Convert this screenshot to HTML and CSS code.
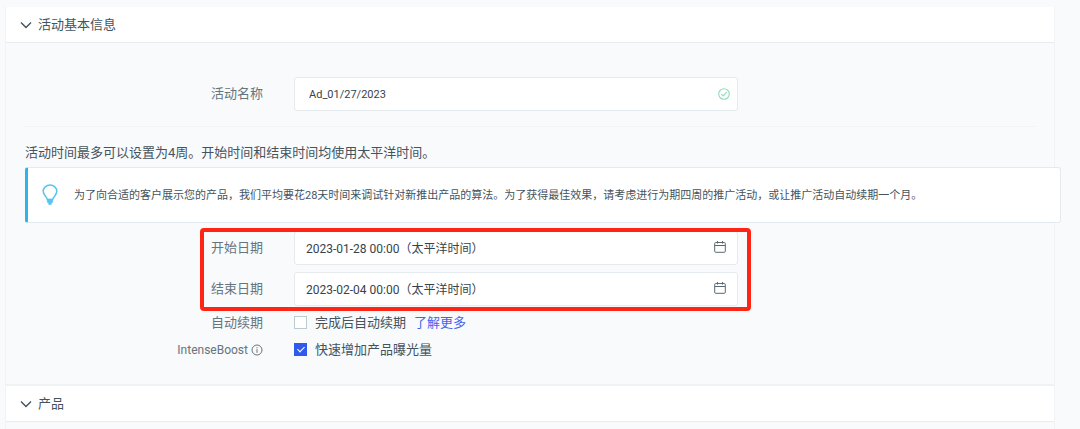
FILE: index.html
```html
<!DOCTYPE html>
<html lang="zh-CN">
<head>
    <meta charset="UTF-8">
    <meta name="viewport" content="width=device-width, initial-scale=1.0">
    <title>活动基本信息</title>
    <link rel="stylesheet" href="styles.css">
</head>
<body>
    <div class="panel">
        <section>
            <h2 class="section-header">
                <svg class="chevron" viewBox="0 0 12 12" fill="none" stroke="currentColor" stroke-width="1.4">
                    <polyline points="1 3.5 6 8.5 11 3.5"></polyline>
                </svg>
                活动基本信息
            </h2>
            <div class="section-body">
                <div class="form-row name-row">
                    <label class="form-label" for="campaignName">活动名称</label>
                    <div class="field">
                        <input type="text" id="campaignName" class="text-input name-input" value="Ad_01/27/2023">
                        <svg class="field-icon valid-icon" viewBox="0 0 12 12" fill="none" stroke="currentColor" stroke-width="1.1">
                            <circle cx="6" cy="6" r="5.3"></circle>
                            <polyline points="3.3 6.2 5.2 7.9 8.7 4.2"></polyline>
                        </svg>
                    </div>
                </div>

                <p class="time-note">活动时间最多可以设置为4周。开始时间和结束时间均使用太平洋时间。</p>

                <div class="tip">
                    <svg class="tip-icon" viewBox="0 0 16 22" fill="none" stroke="currentColor" stroke-width="1.5">
                        <path d="M5.3 15.5C5.2 13 1.2 11.3 1.2 7.3a6.8 6.3 0 0 1 13.6 0c0 4-4 5.7-4.1 8.2z"></path>
                        <path d="M5.3 15.3h5.4v3l-1.5 1.2v1H6.8v-1l-1.5-1.2z" fill="currentColor" stroke-width="0.6"></path>
                    </svg>
                    <p>为了向合适的客户展示您的产品，我们平均要花28天时间来调试针对新推出产品的算法。为了获得最佳效果，请考虑进行为期四周的推广活动，或让推广活动自动续期一个月。</p>
                </div>

                <div class="date-group">
                    <div class="form-row">
                        <label class="form-label" for="startDate">开始日期</label>
                        <div class="field">
                            <input type="text" id="startDate" class="text-input" value="2023-01-28 00:00（太平洋时间）">
                            <svg class="field-icon calendar-icon" viewBox="0 0 12 12" fill="none" stroke="currentColor">
                                <rect x="0.7" y="1.5" width="10.6" height="9.8" rx="1"></rect>
                                <path d="M0.7 4.5h10.6M3.5 0v2.6M8.5 0v2.6"></path>
                            </svg>
                        </div>
                    </div>
                    <div class="form-row">
                        <label class="form-label" for="endDate">结束日期</label>
                        <div class="field">
                            <input type="text" id="endDate" class="text-input" value="2023-02-04 00:00（太平洋时间）">
                            <svg class="field-icon calendar-icon" viewBox="0 0 12 12" fill="none" stroke="currentColor">
                                <rect x="0.7" y="1.5" width="10.6" height="9.8" rx="1"></rect>
                                <path d="M0.7 4.5h10.6M3.5 0v2.6M8.5 0v2.6"></path>
                            </svg>
                        </div>
                    </div>
                    <div class="highlight"></div>
                </div>

                <div class="form-row check-row">
                    <span class="form-label">自动续期</span>
                    <div class="check-field">
                        <input type="checkbox" id="autoRenew" class="checkbox">
                        <label for="autoRenew">完成后自动续期</label>
                        <a href="#" class="link">了解更多</a>
                    </div>
                </div>
                <div class="form-row check-row">
                    <span class="form-label boost-label">
                        IntenseBoost
                        <svg class="info-icon" viewBox="0 0 12 12" fill="none" stroke="currentColor">
                            <circle cx="6" cy="6" r="5"></circle>
                            <path d="M6 5.2v3.6M6 3.2v1.1"></path>
                        </svg>
                    </span>
                    <div class="check-field">
                        <input type="checkbox" id="boost" class="checkbox" checked>
                        <label for="boost">快速增加产品曝光量</label>
                    </div>
                </div>
            </div>
        </section>

        <section>
            <h2 class="section-header">
                <svg class="chevron" viewBox="0 0 12 12" fill="none" stroke="currentColor" stroke-width="1.4">
                    <polyline points="1 3.5 6 8.5 11 3.5"></polyline>
                </svg>
                产品
            </h2>
        </section>
    </div>
</body>
</html>
```
FILE: styles.css
```css
* {
    box-sizing: border-box;
}

html {
    background: #f8fafc;
}

body {
    margin: 0;
    padding: 7px 25px 0 5px;
    font-family: Roboto, "Noto Sans CJK SC", sans-serif;
    font-size: 13px;
    line-height: 20px;
    color: #44535d;
    overflow: hidden;
}

.panel {
    min-height: 100vh;
    border: 1px solid #f1f4f7;
    border-top: 0;
}

.section-header {
    display: flex;
    align-items: center;
    gap: 6px;
    height: 36px;
    margin: 0;
    padding: 0 14px;
    background: #fff;
    border-bottom: 1px solid #e6ecef;
    font-size: 13px;
    font-weight: 400;
}

.chevron {
    width: 12px;
    height: 12px;
}

.section-body {
    padding: 34px 19px 21px;
    border-bottom: 2px solid #eff2f5;
}

.form-row {
    display: flex;
    align-items: center;
    gap: 31px;
}

.form-label {
    flex: 0 0 238px;
    text-align: right;
    color: #66747d;
}

.name-row {
    padding-bottom: 15px;
    border-bottom: 1px solid #f1f4f7;
}

.field {
    position: relative;
    flex: 0 1 444px;
}

.text-input {
    display: block;
    width: 100%;
    height: 34px;
    padding: 0 32px 2px 11px;
    border: 1px solid #e4eaee;
    border-radius: 3px;
    background: #fff;
    font-family: inherit;
    font-size: 12px;
    color: #36434c;
}

.name-input {
    padding: 0 32px 0 14px;
    font-size: 11px;
}

.field-icon {
    position: absolute;
    top: 11px;
    width: 12px;
    height: 12px;
}

.valid-icon {
    right: 8px;
    color: #8fdcbb;
}

.calendar-icon {
    top: 10px;
    right: 12px;
    color: #5a6973;
}

.time-note {
    margin: 16px 0 4px;
}

/* the tip runs a little past the panel edge */
.tip {
    display: flex;
    align-items: center;
    gap: 16px;
    min-height: 56px;
    margin-right: -26px;
    padding: 0 14px;
    border: 1px solid #e4eaee;
    border-left: 3px solid #2db4ea;
    border-radius: 3px;
    background: #fff;
    font-size: 11px;
}

.tip p {
    margin: 2px 0 0;
}

.tip-icon {
    flex: none;
    width: 16px;
    height: 22px;
    color: #5ac3ef;
}

.date-group {
    position: relative;
    display: flex;
    flex-direction: column;
    gap: 7px;
    margin: 8px 0 3px;
}

.highlight {
    position: absolute;
    top: -3px;
    bottom: -5px;
    left: 175px;
    width: 551px;
    border: 4px solid #ff2414;
    border-radius: 4px;
    pointer-events: none;
}

.check-row {
    height: 27px;
}

.check-field {
    display: flex;
    align-items: center;
    gap: 8px;
}

.checkbox {
    appearance: none;
    width: 13px;
    height: 13px;
    margin: 0;
    border: 1px solid #bccbd2;
    background: #fff;
}

.checkbox:checked {
    border-color: #2f5bea;
    background: #2f5bea;
}

.checkbox:checked::after {
    content: "";
    display: block;
    width: 3px;
    height: 6px;
    margin: 1px auto;
    border: solid #fff;
    border-width: 0 1px 1px 0;
    transform: rotate(45deg);
}

.link {
    color: #4662f0;
    text-decoration: none;
}

.boost-label {
    display: flex;
    align-items: center;
    justify-content: flex-end;
    gap: 3px;
    font-size: 12px;
}

.info-icon {
    width: 12px;
    height: 12px;
}
```
